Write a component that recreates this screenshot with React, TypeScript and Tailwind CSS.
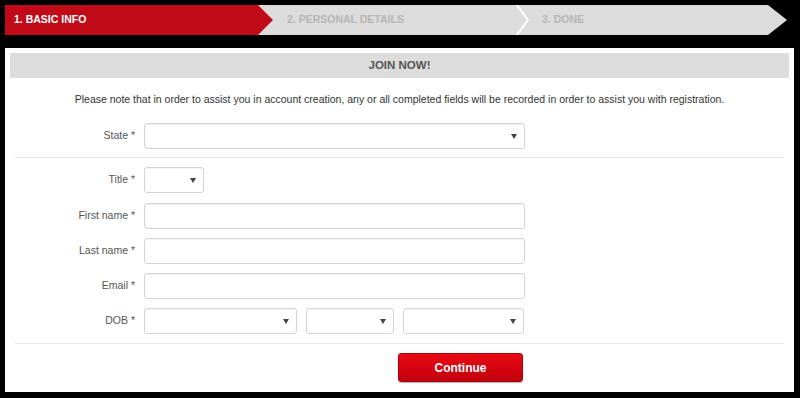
import React from "react";

function Caret() {
  return (
    <svg width="6" height="5" viewBox="0 0 6 5" className="shrink-0">
      <path d="M0 0 H6 L3 5 Z" fill="#444" />
    </svg>
  );
}

function Select({ className }: { className: string }) {
  return (
    <div
      className={`h-[26px] flex items-center justify-end pr-[7px] bg-white border border-[#d4d4d4] rounded-[3px] shadow-[inset_0_1px_1px_rgba(0,0,0,0.05)] ${className}`}
    >
      <Caret />
    </div>
  );
}

function Input() {
  return (
    <div className="h-[26px] w-[381px] bg-white border border-[#d4d4d4] rounded-[3px] shadow-[inset_0_1px_1px_rgba(0,0,0,0.05)]" />
  );
}

function Row({ label, children }: { label: string; children: React.ReactNode }) {
  return (
    <div className="flex items-center h-[26px]">
      <div className="w-[126px] text-right text-[10.5px] text-[#555] pr-[1px]">{label}</div>
      <div className="ml-[8px] flex items-center">{children}</div>
    </div>
  );
}

export default function App() {
  return (
    <div
      className="w-[800px] h-[398px] bg-black pt-[5px] pl-[5px] overflow-hidden"
      style={{ fontFamily: '"Liberation Sans", Arial, sans-serif' }}
    >
      {/* Steps */}
      <div className="w-[782px] h-[30px] flex bg-[#dcdcdc] [clip-path:polygon(0_0,763px_0,100%_50%,763px_100%,0_100%)]">
        <div className="w-[268px] h-full bg-[#c10a17] flex items-center pl-[9px] [clip-path:polygon(0_0,253px_0,100%_50%,253px_100%,0_100%)]">
          <span className="text-white font-bold text-[10.5px]">1. BASIC INFO</span>
        </div>
        <div className="w-[242px] h-full flex items-center pl-[14px]">
          <span className="text-[#b5b5b5] font-bold text-[10.5px]">2. PERSONAL DETAILS</span>
        </div>
        <svg width="16" height="30" viewBox="0 0 16 30" className="shrink-0">
          <path d="M1 -1 L13 15 L1 31" stroke="#fff" strokeWidth="2" fill="none" />
        </svg>
        <div className="h-full flex items-center pl-[11px]">
          <span className="text-[#b5b5b5] font-bold text-[10.5px]">3. DONE</span>
        </div>
      </div>

      {/* Panel */}
      <div className="mt-[13px] w-[789px] h-[344px] bg-white pt-[5px] px-[5px]">
        <div className="h-[25px] bg-[#dcdcdc] flex items-center justify-center">
          <span className="text-[#555] font-bold text-[11.5px]">JOIN NOW!</span>
        </div>
        <p className="mt-[14px] text-center text-[10.5px] text-[#333] leading-[14px]">
          Please note that in order to assist you in account creation, any or all completed fields will be recorded in order to assist you with registration.
        </p>
        <div className="mt-[17px]">
          <Row label="State *">
            <Select className="w-[381px]" />
          </Row>
        </div>
        <div className="mt-[8px] mx-[5px] h-px bg-[#e6e6e6]" />
        <div className="mt-[9px] flex flex-col gap-[9px]">
          <Row label="Title *">
            <Select className="w-[60px]" />
          </Row>
          <div className="mt-[1px]">
            <Row label="First name *">
              <Input />
            </Row>
          </div>
          <Row label="Last name *">
            <Input />
          </Row>
          <Row label="Email *">
            <Input />
          </Row>
          <Row label="DOB *">
            <div className="flex gap-[9px]">
              <Select className="w-[153px]" />
              <Select className="w-[88px]" />
              <Select className="w-[121px]" />
            </div>
          </Row>
        </div>
        <div className="mt-[9px] mx-[5px] h-px bg-[#e6e6e6]" />
        <div className="mt-[9px] pl-[388px]">
          <button className="w-[125px] h-[29px] rounded-[3px] border border-[#a9000c] bg-gradient-to-b from-[#ea0a14] to-[#c0000c] text-white font-bold text-[12px] shadow-[0_1px_1px_rgba(0,0,0,0.3)]">
            Continue
          </button>
        </div>
      </div>
    </div>
  );
}
